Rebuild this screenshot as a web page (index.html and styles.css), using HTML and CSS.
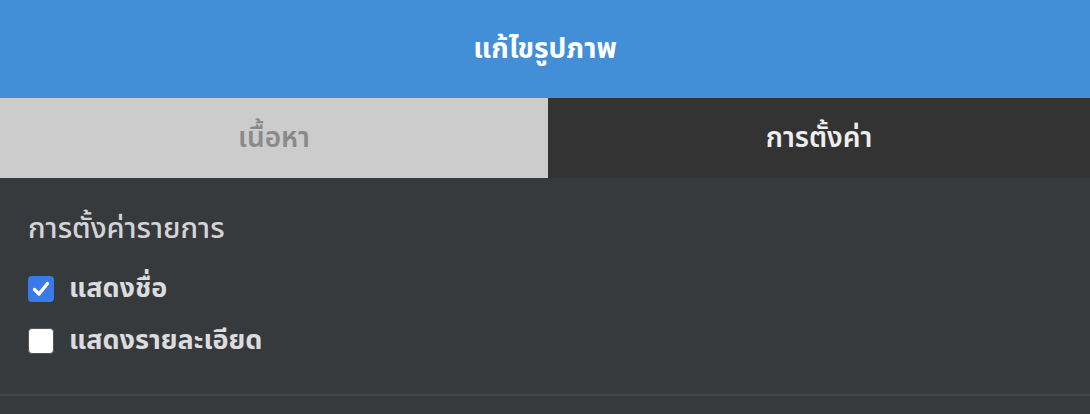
FILE: index.html
```html
<!DOCTYPE html>
<html lang="th">
<head>
<meta charset="utf-8">
<title>แก้ไขรูปภาพ</title>
<link rel="stylesheet" href="styles.css">
</head>
<body>
<div class="panel">
  <header class="panel-header">แก้ไขรูปภาพ</header>
  <nav class="tabs">
    <div class="tab tab-inactive">เนื้อหา</div>
    <div class="tab tab-active">การตั้งค่า</div>
  </nav>
  <section class="settings">
    <h2 class="settings-title">การตั้งค่ารายการ</h2>
    <label class="option">
      <span class="box box-checked">
        <svg viewBox="0 0 26 26" width="26" height="26"><path d="M6.5 13.5 L11 18 L19.5 7.5" fill="none" stroke="#fff" stroke-width="3.4" stroke-linecap="round" stroke-linejoin="round"/></svg>
      </span>
      <span class="option-text">แสดงชื่อ</span>
    </label>
    <label class="option">
      <span class="box"></span>
      <span class="option-text">แสดงรายละเอียด</span>
    </label>
  </section>
  <div class="divider"></div>
</div>
</body>
</html>
```
FILE: styles.css
```css
html, body {
  margin: 0;
  padding: 0;
  background: #373a3d;
  font-family: "Noto Sans Thai", "Noto Sans Thai UI", "Noto Sans", "Liberation Sans", sans-serif;
}

.panel {
  width: 1090px;
  height: 414px;
  display: flex;
  flex-direction: column;
  background: #373a3d;
}

.panel-header {
  height: 98px;
  flex: none;
  background: #428fd7;
  color: #ffffff;
  font-size: 28px;
  font-weight: 700;
  display: flex;
  align-items: center;
  justify-content: center;
}

.tabs {
  display: flex;
  height: 80px;
  flex: none;
}

.tab {
  display: flex;
  align-items: center;
  justify-content: center;
  font-size: 28px;
  font-weight: 600;
}

.tab-inactive {
  width: 548px;
  background: #cccccc;
  color: #8a8a8a;
}

.tab-active {
  flex: 1;
  background: #333333;
  color: #eeeeee;
}

.settings {
  padding: 31px 28px 0;
  height: 216px;
  flex: none;
  box-sizing: border-box;
}

.settings-title {
  margin: 0 0 14px;
  font-size: 29px;
  font-weight: 500;
  color: #d4d4d6;
  line-height: 40px;
}

.option {
  display: flex;
  align-items: center;
  gap: 15px;
  height: 52px;
  line-height: 52px;
  color: #dcdcde;
  font-size: 27px;
  font-weight: 700;
}

.box {
  width: 26px;
  height: 26px;
  flex: none;
  box-sizing: border-box;
  border-radius: 4px;
  background: #ffffff;
  border: 1.5px solid #555;
  display: flex;
}

.box-checked {
  background: #3a7ae8;
  border: none;
}

.divider {
  height: 2px;
  flex: none;
  background: #464646;
}
```
